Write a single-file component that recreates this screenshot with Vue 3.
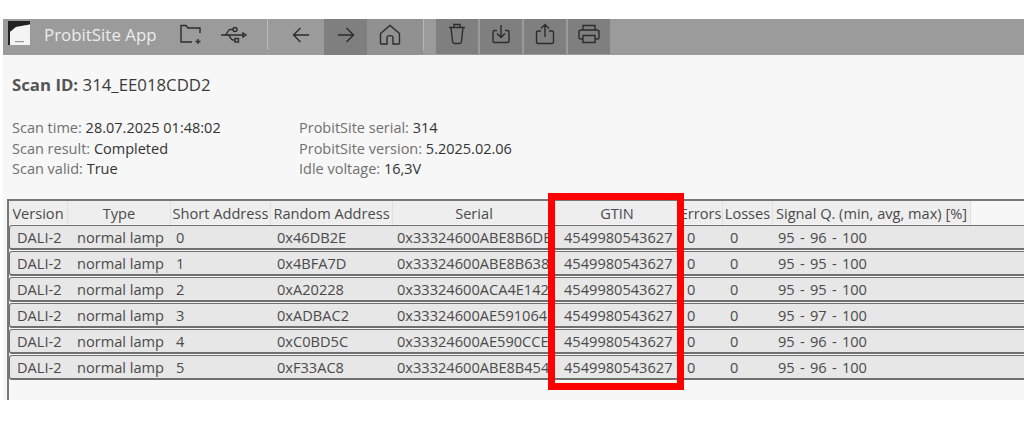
<script setup>
const columns = ['Version', 'Type', 'Short Address', 'Random Address', 'Serial', 'GTIN', 'Errors', 'Losses', 'Signal Q. (min, avg, max) [%]']
const rows = [
  { short: 0, random: '0x46DB2E', serial: '0x33324600ABE8B6DE', signal: '95 - 96 - 100' },
  { short: 1, random: '0x4BFA7D', serial: '0x33324600ABE8B638', signal: '95 - 95 - 100' },
  { short: 2, random: '0xA20228', serial: '0x33324600ACA4E142', signal: '95 - 95 - 100' },
  { short: 3, random: '0xADBAC2', serial: '0x33324600AE591064', signal: '95 - 97 - 100' },
  { short: 4, random: '0xC0BD5C', serial: '0x33324600AE590CCE', signal: '95 - 96 - 100' },
  { short: 5, random: '0xF33AC8', serial: '0x33324600ABE8B454', signal: '95 - 96 - 100' }
]
</script>

<template>
  <div class="shell">
    <header class="titlebar">
      <svg class="logo" width="22" height="24" viewBox="0 0 22 24">
        <path d="M0 0H22V3.500L8 6 2 11V24H0Z" fill="#222" />
        <path d="M2 11 8 6 22 3.500V24H2Z" fill="#f4f4f4" />
        <rect x="7" y="20" width="9" height="1.200" fill="#999" />
      </svg>
      <span class="app-name">ProbitSite App</span>

      <button class="tool folder">
        <svg width="24" height="22" viewBox="0 0 24 22"><path d="M21 9V4H9L7 1.500H2V18H13M19 15V20M16.500 17.500H21.500" /></svg>
      </button>
      <button class="tool usb">
        <svg width="28" height="20" viewBox="0 0 28 20"><path d="M1 10H23M23 8 26 10 23 12ZM5 10C7 10 8 4.500 10 4.500H13M8 10C10 10 10.500 15 13 15H15" /><circle cx="15" cy="4.500" r="2" /><rect x="15" y="13.500" width="3.500" height="3.500" /></svg>
      </button>
      <span class="divider first"></span>
      <button class="tool back">
        <svg width="18" height="16" viewBox="0 0 18 16"><path d="M17 8H1.500M8.500 1 1.500 8 8.500 15" /></svg>
      </button>
      <button class="tool forward">
        <svg width="18" height="16" viewBox="0 0 18 16"><path d="M1 8H16.500M9.500 1 16.500 8 9.500 15" /></svg>
      </button>
      <button class="tool home">
        <svg width="22" height="21" viewBox="0 0 22 21"><path d="M2 20H8V13.500C8 11 14 11 14 13.500V20H20C20.500 20 20.500 19.500 20.500 19V9.500L11 1.500 1.500 9.500V19C1.500 19.500 1.500 20 2 20Z" /></svg>
      </button>
      <span class="divider second"></span>
      <button class="tool action trash">
        <svg width="18" height="22" viewBox="0 0 18 22"><path d="M1 4.500H17M6 4.500V1.500H12V4.500M3 4.500 4.500 18.500C4.700 20 5.500 20.500 6.500 20.500H11.500C12.500 20.500 13.300 20 13.500 18.500L15 4.500" /></svg>
      </button>
      <button class="tool action">
        <svg width="18" height="20" viewBox="0 0 18 20"><path d="M5 6.500H2.500C1.500 6.500 1 7 1 8V17C1 18 1.500 18.500 2.500 18.500H15.500C16.500 18.500 17 18 17 17V8C17 7 16.500 6.500 15.500 6.500H13M9 1V13M5 9.500 9 13.500 13 9.500" /></svg>
      </button>
      <button class="tool action">
        <svg width="20" height="22" viewBox="0 0 20 22"><path d="M6 8H3C2 8 1.500 8.500 1.500 9.500V19C1.500 20 2 20.500 3 20.500H17C18 20.500 18.500 20 18.500 19V9.500C18.500 8.500 18 8 17 8H14M10 14V1.500M6 5.500 10 1.500 14 5.500" /></svg>
      </button>
      <button class="tool action">
        <svg width="22" height="20" viewBox="0 0 22 20"><path d="M5 6V1.500H17V6M5 15H2.500C1.500 15 1 14.500 1 13.500V8C1 7 1.500 6 3 6H19C20.500 6 21 7 21 8V13.500C21 14.500 20.500 15 19.500 15H17M5 11.500H17V18.500H5Z" /></svg>
      </button>
    </header>

    <main class="content">
      <h1 class="scan-id"><strong>Scan ID:</strong> 314_EE018CDD2</h1>

      <section class="info">
        <div class="info-col">
          <div>Scan time: <b>28.07.2025 01:48:02</b></div>
          <div>Scan result: <b>Completed</b></div>
          <div>Scan valid: <b>True</b></div>
        </div>
        <div class="info-col">
          <div>ProbitSite serial: <b>314</b></div>
          <div>ProbitSite version: <b>5.2025.02.06</b></div>
          <div>Idle voltage: <b>16,3V</b></div>
        </div>
      </section>

      <section class="table">
        <div class="head grid">
          <div v-for="c in columns" :key="c" class="th">{{ c }}</div>
        </div>
        <div v-for="r in rows" :key="r.short" class="row grid">
          <div class="td p-version">DALI-2</div>
          <div class="td p-type">normal lamp</div>
          <div class="td p-short">{{ r.short }}</div>
          <div class="td p-random">{{ r.random }}</div>
          <div class="td p-serial">{{ r.serial }}</div>
          <div class="td p-gtin">4549980543627</div>
          <div class="td p-errors">0</div>
          <div class="td p-losses">0</div>
          <div class="td p-signal">{{ r.signal }}</div>
        </div>
      </section>
    </main>

    <div class="highlight"></div>
  </div>
</template>

<style>
html, body { margin: 0; background: #fff; }
</style>

<style scoped>
.shell {
  position: relative;
  width: 1024px;
  height: 445px;
  box-sizing: border-box;
  padding: 19px 0 0 3px;
  overflow: hidden;
  background: #fff;
  font-family: "Open Sans", "Noto Sans", sans-serif;
  color: #4a4a4a;
}
.titlebar {
  display: flex;
  align-items: stretch;
  height: 36px;
  background: #9b9b9b;
}
.logo { margin: 2px 0 0 5px; }
.app-name {
  margin-left: 14px;
  width: 135px;
  line-height: 31px;
  font-size: 16.900px;
  color: #ececec;
  white-space: nowrap;
}
.tool {
  display: flex;
  align-items: center;
  justify-content: center;
  padding: 0 0 5px;
  border: 0;
  background: transparent;
}
.tool svg { fill: none; stroke: #2c2c2c; stroke-width: 1.400; }
.folder { width: 24px; }
.usb { width: 28px; margin-left: 17px; }
.divider { width: 1px; height: 31px; background: #bcbcbc; }
.divider.first { margin-left: 19px; }
.back { width: 56px; padding-left: 10px; }
.forward { width: 43px; background: #7f7f7f; }
.home { width: 56px; padding-right: 10px; background: #919191; }
.divider.second { background: #b4b8bd; }
.action { width: 42px; height: 35px; margin-right: 2px; background: #7f7f7f; }
.trash { margin-left: 12px; }
.content {
  height: 345px;
  box-sizing: border-box;
  padding: 19px 0 0 4px;
  background: #f7f7f7;
}
.scan-id {
  margin: 0 0 0 5px;
  font-size: 16.800px;
  line-height: 22px;
  font-weight: 400;
  color: #3b3b3b;
}
.scan-id strong { font-weight: 700; color: #555; }
.info {
  display: grid;
  grid-template-columns: 287px auto;
  justify-content: start;
  margin: 22px 0 0 5px;
  font-size: 14.500px;
  line-height: 20.500px;
  color: #707070;
}
.info b { font-weight: 400; color: #333; }
.table {
  height: 201px;
  box-sizing: border-box;
  margin-top: 19.500px;
  border-top: 2px solid #777;
  border-left: 2px solid #777;
  overflow: hidden;
  font-size: 14.600px;
}
.grid {
  display: grid;
  grid-template-columns: 59px 103px 100px 122px 163px 123px 44px 50px 198px;
}
.head {
  height: 23px;
  width: 962px;
  margin-bottom: 1px;
  line-height: 24px;
  background: #eee;
}
.th {
  text-align: center;
  white-space: nowrap;
  border-right: 1px solid #e0e0e0;
  box-sizing: border-box;
  color: #4a4a4a;
}
.row {
  height: 25px;
  margin-bottom: 1px;
  margin-right: -20px;
  padding-top: 1px;
  box-sizing: border-box;
  border: 1px solid #6f6f6f;
  border-bottom-width: 2px;
  border-radius: 3px;
  line-height: 21px;
  background: #e7e7e7;
}
.td { white-space: nowrap; overflow: hidden; }
.p-version { padding-left: 7px; }
.p-type { padding-left: 8px; }
.p-short { padding-left: 4px; }
.p-random { padding-left: 5px; }
.p-serial { padding-left: 3px; }
.p-gtin { padding-left: 7px; }
.p-errors { padding-left: 7px; }
.p-losses { padding-left: 6px; }
.p-signal { padding-left: 4px; word-spacing: 1.500px; }
.highlight {
  position: absolute;
  left: 548px;
  top: 193px;
  width: 136px;
  height: 197px;
  box-sizing: border-box;
  border: 7px solid #f00;
}
</style>
